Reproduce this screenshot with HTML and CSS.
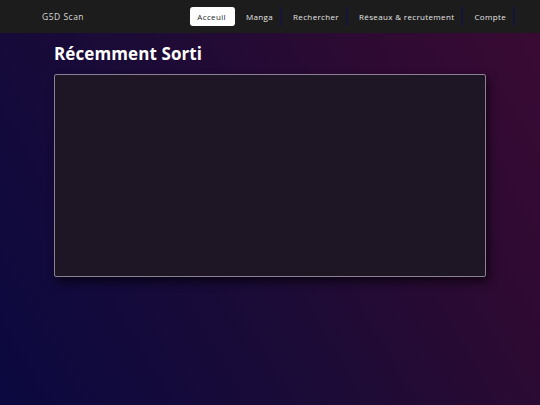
FILE: index.html
```html
<!DOCTYPE html>
<html lang="fr">
<head>
  <meta charset="UTF-8">
  <meta name="viewport" content="width=device-width, initial-scale=1.0">
  <title>G5D Scan</title>
  <link rel="stylesheet" href="styles.css">
</head>
<body>
  <!-- barre de navigation -->
  <header class="navbar">
    <div class="brand">G5D Scan</div>
    <nav class="nav-links">
      <a href="#" class="nav-link active">Acceuil</a>
      <a href="#" class="nav-link">Manga</a>
      <a href="#" class="nav-link">Rechercher</a>
      <a href="#" class="nav-link">Réseaux &amp; recrutement</a>
      <a href="#" class="nav-link">Compte</a>
    </nav>
  </header>
  <main class="content">
    <h1 class="section-title">Récemment Sorti</h1>
    <div class="recent-box"></div>
  </main>
</body>
</html>
```
FILE: styles.css
```css
html {
  min-height: 100%;
}
body {
  margin: 0;
  padding: 0;
  min-height: 100vh;
  font-family: "Open Sans", "Noto Sans", sans-serif;
  color: #fff;
  background: linear-gradient(60deg, #0b0940 0%, #1c0b36 45%, #2e0a32 75%, #3a0a34 100%);
}
.navbar {
  display: flex;
  justify-content: space-between;
  align-items: center;
  height: 33px;
  padding: 0 21px 0 42px;
  background: #1c1c1c;
}
.brand {
  font-size: 8.5px;
  color: #d8d8d8;
  letter-spacing: 0.5px;
}
.nav-links {
  display: flex;
  align-items: center;
}
.nav-link {
  font-size: 8px;
  font-weight: 500;
  color: #e6e6e6;
  text-decoration: none;
  padding: 4px 7px;
  margin-right: 4px;
  border-right: 2px solid #14143a;
  letter-spacing: 0.35px;
}
.nav-link.active {
  background: #fff;
  color: #1c1c1c;
  border-radius: 3px;
  border-right-color: #fff;
}
.content {
  padding: 9px 54px;
}
.section-title {
  margin: 0 0 9px;
  font-size: 17px;
  font-weight: 700;
  letter-spacing: 0.1px;
}
.recent-box {
  width: 430px;
  height: 201px;
  background: #1e1625;
  border: 1px solid #8b8195;
  border-radius: 2px;
  box-shadow: 3px 5px 10px rgba(0, 0, 0, 0.6);
}
```
